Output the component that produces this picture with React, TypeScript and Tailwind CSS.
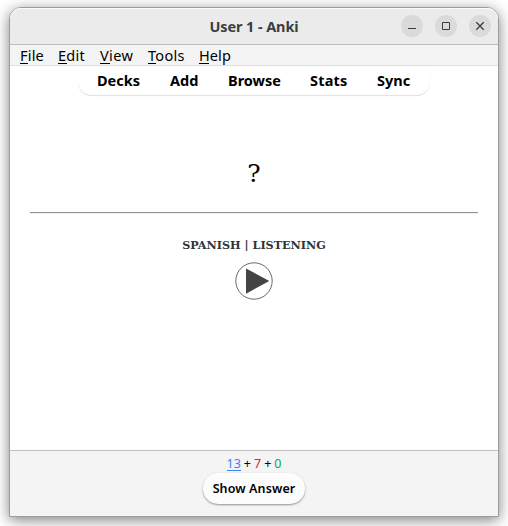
const menus = [
  { label: 'File', box: 'w-[38px] tracking-[0.2px]', line: 'w-[8px]' },
  { label: 'Edit', box: 'w-[42px] tracking-[0.3px]', line: 'w-[9px]' },
  { label: 'View', box: 'w-[48px] tracking-[0.4px]', line: 'w-[10px]' },
  { label: 'Tools', box: 'w-[51px] tracking-[0.3px]', line: 'w-[8px]' },
  { label: 'Help', box: 'w-[40px] tracking-[0.1px]', line: 'w-[10px]' },
];

const links = [
  { label: 'Decks', box: 'w-[73px] tracking-[0]' },
  { label: 'Add', box: 'w-[58px] tracking-[0]' },
  { label: 'Browse', box: 'w-[82px] tracking-[0]' },
  { label: 'Stats', box: 'w-[67px] tracking-[0.2px]' },
  { label: 'Sync', box: 'w-[40px] tracking-[0]' },
];

function TitleBar() {
  return (
    <header className="grid h-[37px] shrink-0 grid-cols-[1fr_auto_1fr] items-center rounded-t-[11px] border-b border-[#bdbdbd] bg-[#ebebeb] shadow-[inset_0_1px_0_#fafafa]">
      <span />
      <h1 className="text-[14.5px] leading-5 font-bold tracking-[-0.1px] whitespace-nowrap text-[#3d3d3d]">User 1 - Anki</h1>
      <div className="flex justify-end gap-3 pr-[7px]">
        <button aria-label="Minimize" className="size-[22px] rounded-full bg-[#dadada]">
          <svg viewBox="0 0 22 22" className="size-[22px]"><path d="M7 13.5h8" stroke="#3d3d3d" /></svg>
        </button>
        <button aria-label="Maximize" className="size-[22px] rounded-full bg-[#dadada]">
          <svg viewBox="0 0 22 22" className="size-[22px]"><path d="M7.5 7.5h7v7h-7z" fill="none" stroke="#3d3d3d" /></svg>
        </button>
        <button aria-label="Close" className="size-[22px] rounded-full bg-[#dadada]">
          <svg viewBox="0 0 22 22" className="size-[22px]"><path d="M7.3 7.3l7.4 7.4M14.7 7.3l-7.4 7.4" stroke="#3d3d3d" strokeWidth="1.3" /></svg>
        </button>
      </div>
    </header>
  );
}

export default function App() {
  return (
    <div className="h-[526px] w-[508px] overflow-hidden bg-white pt-[7px] pl-[9px] font-['Noto_Sans',sans-serif] text-black">
      <div className="flex h-[510px] w-[490px] flex-col rounded-t-xl border border-[#9c9c9c] bg-white shadow-[0_3px_14px_rgba(0,0,0,0.5)]">
        <TitleBar />
        <nav className="flex h-[21px] shrink-0 border-b border-[#e0e0e0] bg-[#f4f4f4] pl-[10px] text-[14.5px] leading-[20px]">
          {menus.map((m) => (
            <span key={m.label} className={`${m.box} h-[20px] whitespace-nowrap`}>
              <span className="block h-[18px]">{m.label}</span>
              <span className={`${m.line} block h-px bg-black`} />
            </span>
          ))}
        </nav>
        <main className="flex h-[384px] shrink-0 flex-col items-center">
          <div className="flex h-[30px] w-[352px] shrink-0 rounded-b-[14px] border-b border-[#e2e2e2] bg-white pl-[19px] text-[14.5px] leading-[29px] font-bold shadow-[0_0_1px_rgba(0,0,0,0.12)]">
            {links.map((l) => (
              <span key={l.label} className={`${l.box} whitespace-nowrap`}>{l.label}</span>
            ))}
          </div>
          <div className="mt-[60px] h-[36px] font-['DejaVu_Serif',serif] text-[25px] leading-[36px]">?</div>
          <hr className="mt-[20px] h-[2px] w-[448px] shrink-0 border-t border-b border-t-[#929292] border-b-[#eeeeee]" />
          <div className="mt-[23px] h-[16px] font-['DejaVu_Serif',serif] text-[11.2px] leading-[16px] font-bold whitespace-nowrap text-[#333]">SPANISH | LISTENING</div>
          <svg viewBox="0 0 38 38" className="mt-[9px] size-[38px] shrink-0">
            <circle cx="19" cy="19" r="18.2" fill="white" stroke="#444" strokeWidth=".8" />
            <path d="M11 6.5v25.2L34.3 19z" fill="#444" />
          </svg>
        </main>
        <footer className="flex h-[66px] shrink-0 flex-col items-center border-t border-[#bebebe] bg-[#f4f4f4]">
          <div className="mt-[3px] flex h-[18px] gap-[3px] text-[12.5px] leading-[19px]">
            <span className="h-[17px] border-b border-[#3b82f6] text-[#3b82f6]">13</span>
            <span>+</span><span className="text-[#dc2626]">7</span>
            <span>+</span><span className="text-[#16a34a]">0</span>
          </div>
          <button className="mt-px h-[31px] w-[102px] rounded-[15px] bg-[#fcfcfc] text-[12.5px] leading-[31px] font-semibold tracking-[0.1px] whitespace-nowrap shadow-[0_1px_2px_rgba(0,0,0,0.4)]">Show Answer</button>
        </footer>
      </div>
    </div>
  );
}
